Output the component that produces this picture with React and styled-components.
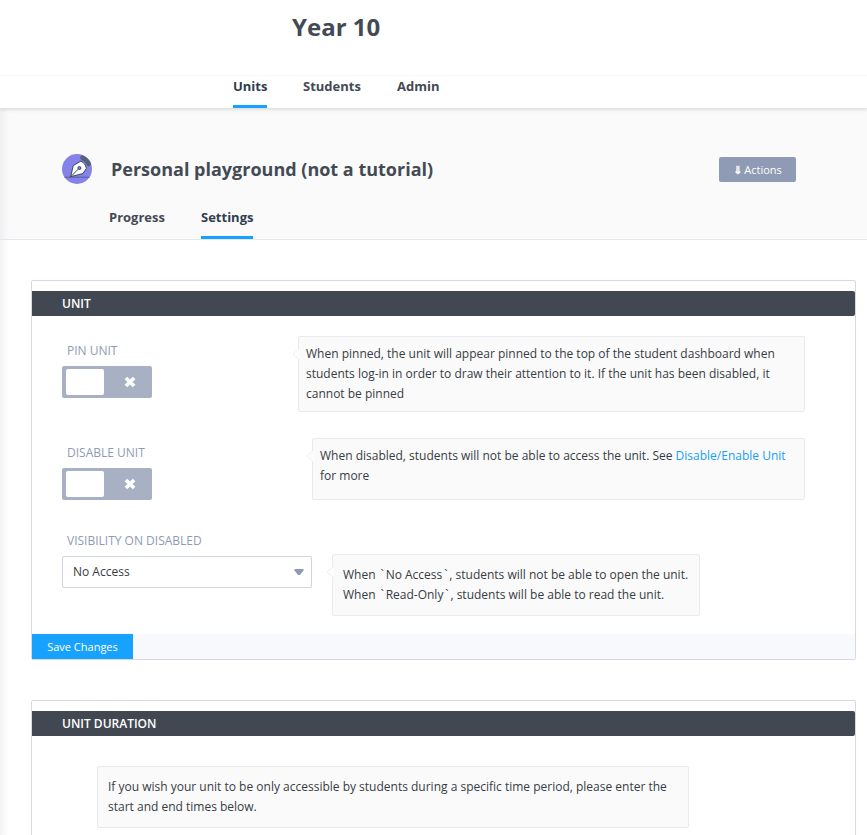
import React from "react";
import styled, { createGlobalStyle } from "styled-components";

const GlobalStyle = createGlobalStyle`
  * { box-sizing: border-box; }
  body { margin: 0; background: #fff; color: #363c44; font-family: "Open Sans", "Noto Sans", sans-serif; font-size: 12px; line-height: 20px; }
`;

const Page = styled.div`
  width: 867px;
  height: 835px;
  overflow: hidden;
  display: flex;
  flex-direction: column;
`;
const TopBar = styled.header`
  height: 76px;
  flex: none;
  border-bottom: 1px solid #f7f7f8;
  padding: 10px 0 0 292px;
`;
const PageTitle = styled.h1`
  margin: 0;
  font-size: 24px;
  line-height: 34px;
  font-weight: 700;
  color: #434a54;
`;
const NavBar = styled.nav`
  height: 32px;
  flex: none;
  display: flex;
  gap: 36px;
  padding-left: 233px;
  background: #fff;
  position: relative;
  z-index: 1;
  box-shadow: 0 1px 4px rgba(40, 45, 60, 0.2);
  clip-path: inset(0 0 -8px 0);
`;
const Tab = styled.a`
  width: ${(p) => p.$w}px;
  height: 32px;
  border-bottom: 3px solid ${(p) => (p.$active ? "#18a2ff" : "transparent")};
  color: ${(p) => (p.$active ? "#313d4f" : "#434a54")};
  font-size: 13px;
  line-height: 20px;
  font-weight: 700;
  white-space: nowrap;
`;
const Body = styled.div`
  flex: 1;
  min-height: 0;
  background: linear-gradient(to right, rgba(70, 70, 130, 0.06), rgba(70, 70, 130, 0) 9px);
`;
const UnitHeader = styled.section`
  height: 132px;
  background: linear-gradient(to right, rgba(70, 70, 130, 0.06), rgba(70, 70, 130, 0) 9px), #fafafa;
  border-bottom: 1px solid #e6e7ed;
  display: flex;
  flex-direction: column;
  justify-content: space-between;
`;
const UnitRow = styled.div`
  display: flex;
  align-items: center;
  height: 32px;
  margin-top: 45px;
  padding: 0 71px 0 61px;
`;
const UnitIcon = styled.svg`
  width: 32px;
  height: 32px;
  margin-right: 18px;
`;
const UnitName = styled.h2`
  margin: 0;
  flex: 1;
  font-size: 18px;
  line-height: 26px;
  font-weight: 700;
  color: #434a54;
`;
const ActionsButton = styled.button`
  width: 77px;
  height: 25px;
  padding: 0;
  border: 0;
  border-radius: 2px;
  background: #8f9ab4;
  color: #fff;
  font: 11px/25px "Open Sans", "DejaVu Sans", sans-serif;
  word-spacing: -1px;
`;
const ActionsGlyph = styled.span`
  -webkit-text-stroke: 0.4px #fff;
`;
const UnitTabs = styled.nav`
  display: flex;
  gap: 36px;
  padding-left: 109px;
`;
const Content = styled.main`
  padding: 40px 11px 0 31px;
  display: flex;
  flex-direction: column;
  gap: 40px;
`;
const Panel = styled.section`
  height: 380px;
  padding-top: 10px;
  border: 1px solid #d6d8e6;
  border-radius: 2px;
  background: #fff;
  display: flex;
  flex-direction: column;
`;
const PanelTitle = styled.h3`
  margin: 0;
  height: 25px;
  flex: none;
  padding-left: 30px;
  background: #424851;
  border-radius: 0 2px 2px 0;
  color: #fff;
  font-size: 12px;
  line-height: 25px;
  font-weight: 600;
`;
const Setting = styled.div`
  display: flex;
  align-items: flex-start;
  height: ${(p) => p.$h}px;
  padding-left: 30px;
`;
const Field = styled.div`
  width: ${(p) => p.$w}px;
  flex: none;
`;
const Label = styled.div`
  padding: ${(p) => p.$top}px 0 0 5px;
  margin-bottom: 5px;
  color: #8f9ab4;
  font-size: 12px;
  white-space: nowrap;
`;
const Toggle = styled.div`
  width: 90px;
  height: 32px;
  padding: 3px 16px 3px 4px;
  border-radius: 2px;
  background: #a8b0c4;
  display: flex;
  justify-content: space-between;
  align-items: center;
`;
const Knob = styled.div`
  width: 38px;
  height: 26px;
  border-radius: 2px;
  background: #fff;
`;
const Cross = styled.svg`
  width: 12px;
  height: 12px;
`;
const Select = styled.div`
  width: 250px;
  height: 32px;
  padding: 0 7px 0 10px;
  border: 1px solid #d2d4e4;
  border-radius: 2px;
  background: #fff;
  display: flex;
  justify-content: space-between;
  align-items: center;
`;
const Caret = styled.svg`
  width: 10px;
  height: 8px;
`;
const Note = styled.div`
  position: relative;
  width: ${(p) => p.$w}px;
  height: ${(p) => p.$h}px;
  padding: ${(p) => p.$pad};
  margin-top: ${(p) => p.$mt || 0}px;
  border: 1px solid #e9eaf0;
  border-radius: 2px;
  background: #fafafa;
  white-space: nowrap;
`;
const Pointer = styled.svg`
  position: absolute;
  left: -7px;
  top: 10px;
  width: 8px;
  height: 14px;
`;
const Line = styled.div``;
const Tick = styled.span`
  display: inline-block;
  width: 7px;
  text-align: center;
`;
const Link = styled.a`
  color: #18a0f5;
`;
const Footer = styled.footer`
  height: 25px;
  flex: none;
  margin-top: auto;
  background: #f8f9fd;
`;
const SaveButton = styled.button`
  display: block;
  width: 101px;
  height: 25px;
  padding: 0;
  border: 0;
  background: #18a2ff;
  color: #fff;
  font: 11px/25px "Open Sans", sans-serif;
`;

const ToggleOff = () => (
  <Toggle>
    <Knob />
    <Cross viewBox="0 0 12 12">
      <path d="M1.900 1.900 10.100 10.100M10.100 1.900 1.900 10.100" stroke="#fff" strokeWidth="3.600" fill="none" />
    </Cross>
  </Toggle>
);
const Arrow = () => (
  <Pointer viewBox="0 0 8 14">
    <path d="M8 .5 1 7l7 6.5" fill="#fdfdfd" stroke="#efeff4" />
  </Pointer>
);

export default function App() {
  return (
    <Page>
      <GlobalStyle />
      <TopBar><PageTitle>Year 10</PageTitle></TopBar>
      <NavBar>
        <Tab $active $w={34}>Units</Tab>
        <Tab $w={58}>Students</Tab>
        <Tab $w={43}>Admin</Tab>
      </NavBar>
      <Body>
        <UnitHeader>
          <UnitRow>
            <UnitIcon viewBox="0 0 32 32">
              <circle cx="16" cy="16" r="15" fill="#8583ea" />
              <path d="M21.500 4.800q4.500 2 6.300 6.200" stroke="#566078" strokeWidth="4.600" strokeLinecap="round" fill="none" />
              <path d="M3.500 24.200h25" stroke="#5a5c9c" />
              <path d="M9.700 23.700 12.300 12.500 20 8q4.500 2 5.500 7.200L22 20.500Z" fill="#fff" stroke="#3f4658" strokeLinejoin="round" />
              <path d="m9.700 23.700 7.800-7.800" stroke="#3f4658" />
              <circle cx="18.400" cy="15" r="1.500" fill="#8583ea" stroke="#3f4658" />
            </UnitIcon>
            <UnitName>Personal playground (not a tutorial)</UnitName>
            <ActionsButton><ActionsGlyph>⇓</ActionsGlyph> Actions</ActionsButton>
          </UnitRow>
          <UnitTabs>
            <Tab $w={56}>Progress</Tab>
            <Tab $active $w={52}>Settings</Tab>
          </UnitTabs>
        </UnitHeader>
        <Content>
          <Panel>
            <PanelTitle>UNIT</PanelTitle>
            <Setting $h={122}>
              <Field $w={236}><Label $top={25}>PIN UNIT</Label><ToggleOff /></Field>
              <Note $w={507} $h={76} $mt={20} $pad="7px 7px">
                <Arrow />
                <Line>When pinned, the unit will appear pinned to the top of the student dashboard when</Line>
                <Line>students log-in in order to draw their attention to it. If the unit has been disabled, it</Line>
                <Line>cannot be pinned</Line>
              </Note>
            </Setting>
            <Setting $h={92}>
              <Field $w={250}><Label $top={5}>DISABLE UNIT</Label><ToggleOff /></Field>
              <Note $w={493} $h={62} $pad="7px 7px">
                <Arrow />
                <Line>When disabled, students will not be able to access the unit. See <Link>Disable/Enable Unit</Link></Line>
                <Line>for more</Line>
              </Note>
            </Setting>
            <Setting $h={104}>
              <Field $w={270}>
                <Label $top={1}>VISIBILITY ON DISABLED</Label>
                <Select>
                  No Access
                  <Caret viewBox="0 0 10 8"><path d="M.5 1h9v1.500L6 7H4L.5 2.500Z" fill="#8f9ab4" /></Caret>
                </Select>
              </Field>
              <Note $w={368} $h={62} $mt={24} $pad="10px">
                <Arrow />
                <Line>When <Tick>`</Tick>No Access<Tick>`</Tick>, students will not be able to open the unit.</Line>
                <Line>When <Tick>`</Tick>Read-Only<Tick>`</Tick>, students will be able to read the unit.</Line>
              </Note>
            </Setting>
            <Footer><SaveButton>Save Changes</SaveButton></Footer>
          </Panel>
          <Panel>
            <PanelTitle>UNIT DURATION</PanelTitle>
            <Setting $h={122}>
              <Field $w={35} />
              <Note $w={592} $h={62} $mt={30} $pad="10px">
                <Line>If you wish your unit to be only accessible by students during a specific time period, please enter the</Line>
                <Line>start and end times below.</Line>
              </Note>
            </Setting>
          </Panel>
        </Content>
      </Body>
    </Page>
  );
}
